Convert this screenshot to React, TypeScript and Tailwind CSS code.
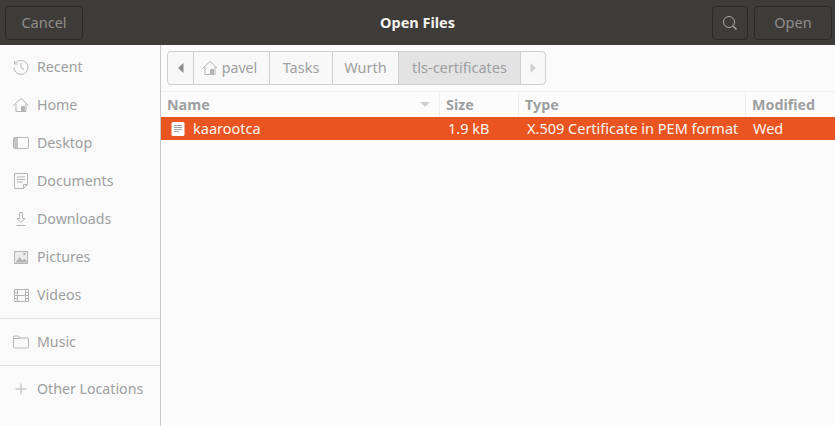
import { ReactNode } from 'react'

const font = { fontFamily: '"Noto Sans", sans-serif' }

function Icon({ children }: { children: ReactNode }) {
  return (
    <svg width="16" height="16" viewBox="0 0 16 16" fill="none" stroke="#b4b4b4" strokeWidth="1" className="shrink-0">
      {children}
    </svg>
  )
}

const places: { label: string; icon: ReactNode }[] = [
  {
    label: 'Recent',
    icon: (
      <Icon>
        <path d="M2.200 4.500A7 7 0 1 1 1 8.500" />
        <path d="M1.500 2v3h3M8 4v4.500l3 2" />
      </Icon>
    ),
  },
  {
    label: 'Home',
    icon: (
      <Icon>
        <path d="M.5 8.500 8 1.500l7.500 7M3 7v7.500h10V7" />
        <path d="M8.500 9.500h3v5h-3z" fill="#b4b4b4" />
      </Icon>
    ),
  },
  {
    label: 'Desktop',
    icon: (
      <Icon>
        <rect x=".5" y="2.500" width="15" height="11" rx="1.500" />
        <path d="M1 3h4v10H1z" fill="#c4c4c4" stroke="none" />
      </Icon>
    ),
  },
  {
    label: 'Documents',
    icon: (
      <Icon>
        <path d="M1.500.5h13v11l-4 4h-9zM10.500 15.500v-4h4M4 4h8M4 6.500h8M4 9h6" />
      </Icon>
    ),
  },
  {
    label: 'Downloads',
    icon: (
      <Icon>
        <path d="M6.500 1.500h3v6h2.500L8 11.500 4 7.500h2.500zM3.500 14.500h9" />
      </Icon>
    ),
  },
  {
    label: 'Pictures',
    icon: (
      <Icon>
        <rect x="1.500" y="2.500" width="13" height="12" fill="#ededed" />
        <path d="M2.500 13.500l4-5.500 3 3.500 2-2 3 4z" fill="#b4b4b4" stroke="none" />
        <circle cx="11.500" cy="5" r="1.200" fill="#b4b4b4" stroke="none" />
      </Icon>
    ),
  },
  {
    label: 'Videos',
    icon: (
      <Icon>
        <path d="M1.500 2.500h14v12h-14zM4.500 2.500v12M12.500 2.500v12M4.500 8.500h8M1.500 5.500h3M1.500 8.500h3M1.500 11.500h3M12.500 5.500h3M12.500 8.500h3M12.500 11.500h3" />
      </Icon>
    ),
  },
]

function Place({ label, icon }: { label: string; icon: ReactNode }) {
  return (
    <div className="flex h-[38px] items-center gap-[5px] pl-[13px] text-[14.200px] text-[#9d9fa1]">
      <span className="flex w-[19px] shrink-0">{icon}</span>
      <span>{label}</span>
    </div>
  )
}

function Crumb({ width, active, children }: { width: string; active?: boolean; children: ReactNode }) {
  return (
    <div
      className={`flex ${width} h-full items-center justify-center border-r border-[#cfcfcf] text-[14.500px] text-[#9d9fa1] ${
        active ? 'bg-[#e3e3e3]' : ''
      }`}
    >
      {children}
    </div>
  )
}

export default function App() {
  return (
    <div className="flex h-[426px] w-[835px] flex-col overflow-hidden bg-[#fcfcfc]" style={font}>
      <header className="relative flex h-[45px] shrink-0 items-center justify-between bg-[#3e3c39] pl-[5px] pr-[3px]">
        <button className="h-[34px] w-[78px] rounded-[4px] border border-[#2b2a28] text-[14.500px] text-[#908f8b]">
          Cancel
        </button>
        <div className="absolute left-[380px] text-[14.500px] font-bold text-[#f4f2ee]">Open Files</div>
        <div className="flex items-center gap-[6px]">
          <button className="flex h-[34px] w-[36px] items-center justify-center rounded-[4px] border border-[#2b2a28]">
            <svg width="16" height="16" viewBox="0 0 16 16" fill="none" stroke="#a8a7a3" strokeWidth="1">
              <circle cx="7" cy="7" r="5.500" />
              <path d="M11 11l3.500 3.500" strokeWidth="1.500" />
            </svg>
          </button>
          <button className="h-[34px] w-[78px] rounded-[4px] border border-[#2b2a28] text-[14.500px] text-[#908f8b]">
            Open
          </button>
        </div>
      </header>

      <div className="flex min-h-0 flex-1">
        <aside className="w-[161px] shrink-0 border-r border-[#c8c8c8] bg-[#fafafa] pt-[3px]">
          {places.map(p => (
            <Place key={p.label} label={p.label} icon={p.icon} />
          ))}
          <div className="mt-[4px] mb-[4px] h-px bg-[#e0e0e0]" />
          <Place
            label="Music"
            icon={
              <Icon>
                <path d="M.5 3a1 1 0 0 1 1-1h4l1.500 2h7.500a1 1 0 0 1 1 1v8a1 1 0 0 1-1 1h-13a1 1 0 0 1-1-1z" />
                <path d="M.5 4.500h6" />
              </Icon>
            }
          />
          <div className="mb-[4px] mt-[4px] h-px bg-[#e0e0e0]" />
          <Place
            label="Other Locations"
            icon={
              <Icon>
                <path d="M8 2.500v11M2.500 8h11" />
              </Icon>
            }
          />
        </aside>

        <main className="min-w-0 flex-1">
          <div className="flex h-[47px] items-start border-b border-[#f0f0f0] pl-[6px] pt-[6px]">
            <nav className="flex h-[34px] overflow-hidden rounded-[4px] border border-[#cfcfcf] bg-[#f8f8f8]">
              <Crumb width="w-[26px]">
                <svg width="6" height="10" viewBox="0 0 6 10" fill="#8e8e8e">
                  <path d="M5.500 0v10L0 5z" />
                </svg>
              </Crumb>
              <Crumb width="w-[76px]">
                <span className="mr-[4px] flex items-center gap-[4px] text-[14.200px]">
                  <Icon>
                    <path d="M.5 8.500 8 1.500l7.500 7M3 7v7.500h10V7" />
                    <path d="M8.500 9.500h3v5h-3z" fill="#b4b4b4" />
                  </Icon>
                  pavel
                </span>
              </Crumb>
              <Crumb width="w-[63px]">Tasks</Crumb>
              <Crumb width="w-[66px]">Wurth</Crumb>
              <Crumb width="w-[122px]" active>
                tls-certificates
              </Crumb>
              <div className="flex w-[24px] items-center justify-center">
                <svg width="6" height="10" viewBox="0 0 6 10" fill="#d0d0d0">
                  <path d="M.5 0v10L6 5z" />
                </svg>
              </div>
            </nav>
          </div>

          <div className="flex h-[25px] items-center text-[14.300px] font-bold text-[#9d9fa1]">
            <div className="flex h-full w-[279px] items-center justify-between border-r border-[#f0f0f0] pl-[6px] pr-[9px]">
              <span>Name</span>
              <svg width="10" height="5" viewBox="0 0 10 5" fill="#cfcfcf">
                <path d="M0 0h10L5 5z" />
              </svg>
            </div>
            <div className="flex h-full w-[79px] items-center border-r border-[#f0f0f0] pl-[6px]">Size</div>
            <div className="flex h-full w-[227px] items-center border-r border-[#f0f0f0] pl-[6px]">Type</div>
            <div className="flex h-full flex-1 items-center pl-[6px]">Modified</div>
          </div>

          <div className="flex h-[23px] items-center bg-[#e95420] text-[14.500px] text-[#fdf3ee]">
            <div className="flex w-[279px] items-center gap-[7px] pl-[9px]">
              <svg width="16" height="16" viewBox="0 0 16 16" className="shrink-0">
                <rect x="1.500" y="1" width="13" height="14" rx="1.500" fill="#fbfbfb" />
                <path d="M4 4.500h8M4 6.500h8M4 8.500h8M4 10.500h5" stroke="#a6a6a6" />
              </svg>
              <span>kaarootca</span>
            </div>
            <div className="w-[79px] pl-[8px]">1.9 kB</div>
            <div className="w-[227px] whitespace-nowrap pl-[8px]">X.509 Certificate in PEM format</div>
            <div className="flex-1 pl-[7px]">Wed</div>
          </div>
        </main>
      </div>
    </div>
  )
}
